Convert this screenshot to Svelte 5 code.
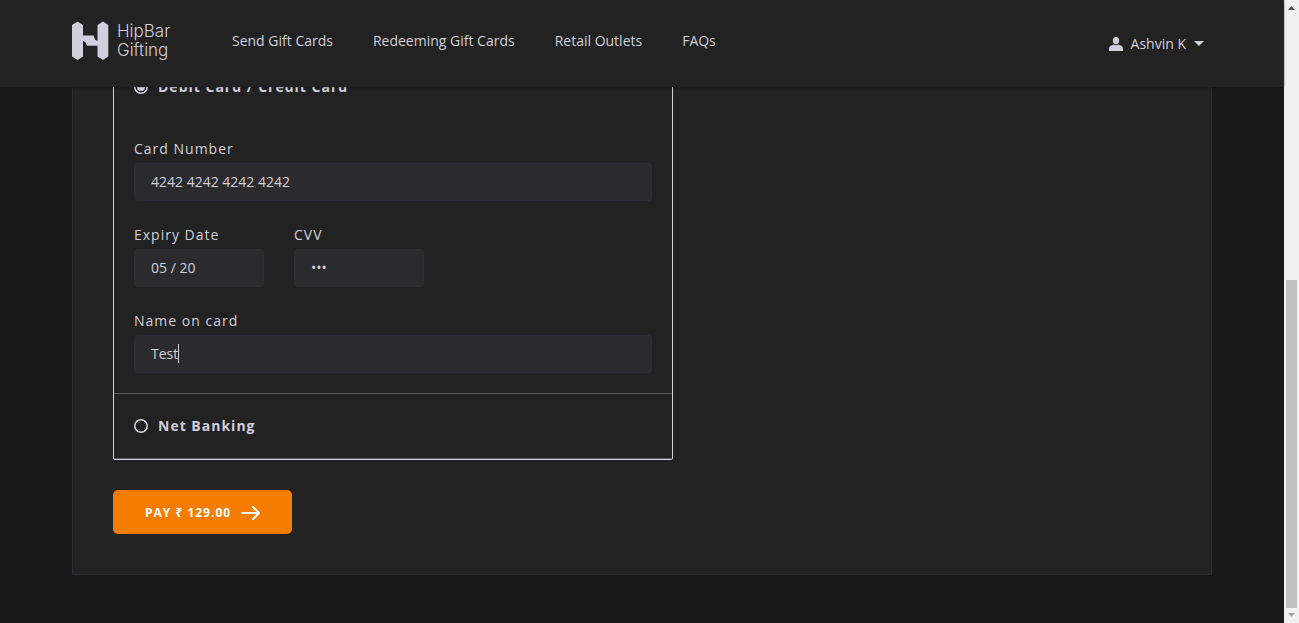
<script>
  const links = ['Send Gift Cards', 'Redeeming Gift Cards', 'Retail Outlets', 'FAQs'];
  let method = $state('card');
  let number = $state('4242 4242 4242 4242');
  let expiry = $state('05 / 20');
  let cvv = $state('123');
  let name = $state('Test');
</script>

<div class="window">
  <div class="page">
    <header>
      <div class="container bar">
        <a class="logo" href="#home">
          <svg width="37" height="40" viewBox="0 0 37 40" aria-hidden="true">
            <path d="M0 4 5.500 0.500 11 4V14.500H21.500L23 18.500 25.500 20V4L31 0.500 36.300 4V35.500L31 39 25.500 35.500V24.800H15L13.500 21.500 11 19.500V35.500L5.500 39 0 35.500Z" />
          </svg>
          <span class="brand"><span>HipBar</span><span>Gifting</span></span>
        </a>
        <nav>
          {#each links as link}
            <a href="#{link}">{link}</a>
          {/each}
        </nav>
        <button class="user" type="button">
          <svg width="14" height="14" viewBox="0 0 14 14" aria-hidden="true">
            <ellipse cx="7" cy="3.600" rx="3.200" ry="3.600" />
            <path d="M4.800 7.500C2 8.300 0 9.500 0 12V14H14V12C14 9.500 12 8.300 9.200 7.500 8 8.500 6 8.500 4.800 7.500Z" />
          </svg>
          <span>Ashvin K</span>
          <svg width="10" height="5" viewBox="0 0 10 5" aria-hidden="true"><path d="M0 0H10L5 5Z" /></svg>
        </button>
      </div>
    </header>

    <main>
      <form class="container panel" onsubmit={(e) => e.preventDefault()}>
        <div class="methods">
          <section>
            <label class="method">
              <input type="radio" name="method" value="card" bind:group={method} />
              Debit Card / Credit Card
            </label>
            <div class="fields">
              <div class="field">
                <label for="number">Card Number</label>
                <input id="number" type="text" bind:value={number} />
              </div>
              <div class="pair">
                <div class="field">
                  <label for="expiry">Expiry Date</label>
                  <input id="expiry" type="text" bind:value={expiry} />
                </div>
                <div class="field">
                  <label for="cvv">CVV</label>
                  <input id="cvv" type="password" bind:value={cvv} />
                </div>
              </div>
              <div class="field caret">
                <label for="name">Name on card</label>
                <input id="name" type="text" bind:value={name} />
              </div>
            </div>
          </section>
          <section>
            <label class="method">
              <input type="radio" name="method" value="bank" bind:group={method} />
              Net Banking
            </label>
          </section>
        </div>
        <button class="pay" type="submit">
          PAY ₹ 129.00
          <svg width="19" height="14" viewBox="0 0 19 14" aria-hidden="true">
            <path d="M1 7H18M12 1 18 7 12 13" />
          </svg>
        </button>
      </form>
    </main>
  </div>

  <div class="scrollbar" aria-hidden="true">
    <svg width="7" height="4" viewBox="0 0 7 4"><path d="M0 4H7L3.500 0Z" /></svg>
    <div class="track"><div class="thumb"></div></div>
    <svg width="7" height="4" viewBox="0 0 7 4"><path d="M0 0H7L3.500 4Z" /></svg>
  </div>
</div>

<style>
  :global(body) {
    margin: 0;
    background: #191919;
  }
  * {
    box-sizing: border-box;
  }
  .window {
    display: flex;
    height: 100vh;
    font: 14px/20px 'Open Sans', 'Noto Sans', sans-serif;
    color: #d1cfdd;
  }
  .page {
    flex: 1;
    min-width: 0;
    display: flex;
    flex-direction: column;
    background: #191919;
  }
  .container {
    width: 100%;
    max-width: 1140px;
    margin: 0 auto;
  }
  header {
    position: relative;
    z-index: 1;
    flex: none;
    background: #222;
    box-shadow: 0 0 2px rgba(0, 0, 0, 0.5);
  }
  .bar {
    display: flex;
    align-items: center;
    height: 87px;
    padding-bottom: 6px;
  }
  a {
    color: inherit;
    text-decoration: none;
  }
  .logo {
    display: flex;
    align-items: center;
    gap: 8px;
  }
  svg {
    display: block;
    fill: currentColor;
  }
  .brand {
    display: flex;
    flex-direction: column;
    width: 56px;
    font: 17px/19px Inter, sans-serif;
    font-weight: 300;
  }
  nav {
    display: flex;
    gap: 40px;
    margin-left: 59px;
  }
  button {
    border: 0;
    font: inherit;
    color: inherit;
    cursor: pointer;
  }
  .user {
    display: flex;
    align-items: center;
    gap: 8px;
    margin: 6px 8px 0 auto;
    padding: 0;
    background: none;
  }
  main {
    flex: 1;
    min-height: 0;
    overflow: hidden;
    display: flex;
    flex-direction: column;
    justify-content: flex-end;
    padding-bottom: 48px;
  }
  .panel {
    flex: none;
    padding: 40px;
    border: 1px solid #2d2d34;
    background: #222;
  }
  .methods {
    max-width: 560px;
    border: 1px solid #d1cfdd;
    border-radius: 2px;
  }
  section {
    border-bottom: 1px solid #5b5b5e;
  }
  .method {
    display: flex;
    align-items: center;
    gap: 10px;
    height: 64px;
    padding: 0 20px;
    font-weight: 700;
    letter-spacing: 1px;
  }
  input {
    margin: 0;
    font: inherit;
    color: inherit;
  }
  input[type='radio'] {
    appearance: none;
    display: grid;
    place-items: center;
    width: 14px;
    height: 14px;
    border-radius: 50%;
    background: radial-gradient(closest-side, transparent 74%, #d1cfdd 82%);
  }
  input[type='radio']:checked::before {
    content: '';
    width: 8px;
    height: 8px;
    border-radius: 50%;
    background: #d1cfdd;
  }
  .fields {
    display: flex;
    flex-direction: column;
    gap: 24px;
    padding: 20px;
  }
  .pair {
    display: grid;
    grid-template-columns: 130px 130px;
    gap: 30px;
  }
  .field {
    position: relative;
    display: flex;
    flex-direction: column;
    gap: 4px;
  }
  .field label {
    letter-spacing: 1px;
  }
  .field input {
    width: 100%;
    height: 38px;
    padding: 0 16px 2px;
    border: 1px solid #2e2e38;
    border-radius: 4px;
    outline: none;
    background: #2b2b2d;
  }
  .caret::after {
    content: '';
    position: absolute;
    left: 44px;
    bottom: 10px;
    width: 1px;
    height: 19px;
    background: #d1cfdd;
  }
  .pay {
    display: flex;
    align-items: center;
    gap: 10px;
    height: 44px;
    margin-top: 30px;
    padding: 1px 32px 0;
    border-radius: 5px;
    background: #f47c00;
    color: #fff;
    font-size: 12px;
    font-weight: 700;
    letter-spacing: 1px;
  }
  .pay svg {
    fill: none;
    stroke: currentColor;
    stroke-width: 2;
    stroke-linecap: round;
    stroke-linejoin: round;
  }
  .scrollbar {
    flex: none;
    display: flex;
    flex-direction: column;
    align-items: center;
    width: 15px;
    padding: 6px 0;
    background: #f1f1f1;
    color: #a3a3a3;
  }
  .scrollbar svg:first-child {
    color: #505050;
  }
  .track {
    flex: 1;
    display: grid;
    grid-template-rows: 21fr 26fr;
    width: 11px;
    padding: 5px 0;
  }
  .thumb {
    grid-row: 2;
    background: #c1c1c1;
  }
</style>
